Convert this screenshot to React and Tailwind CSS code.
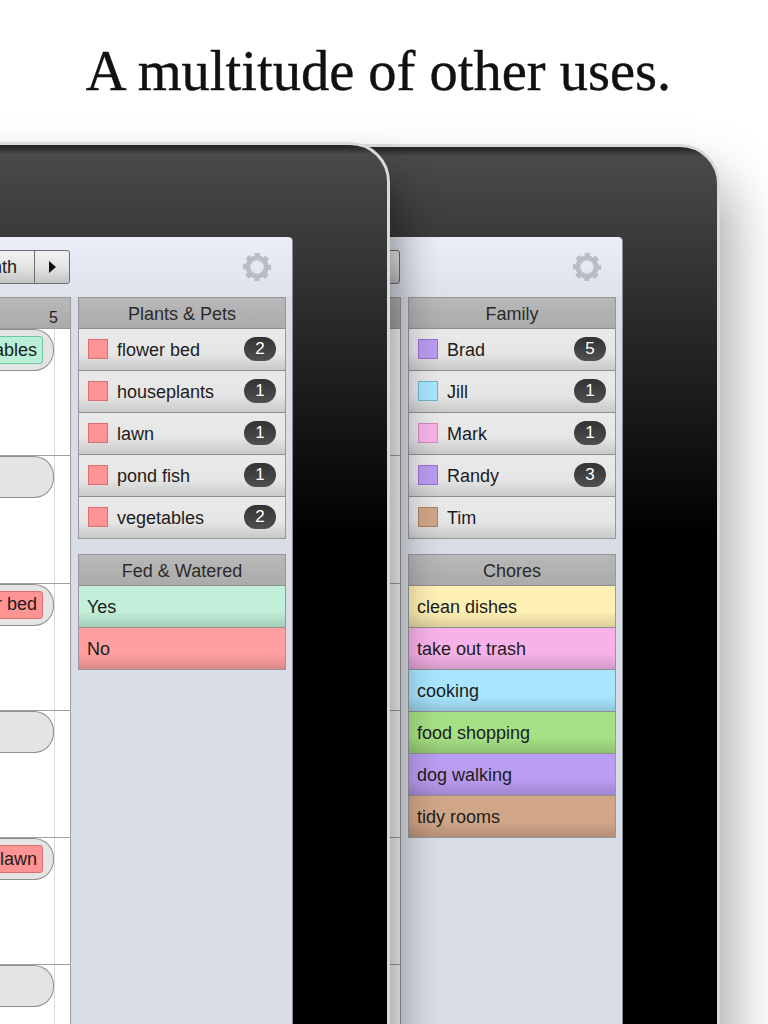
const F = { fontFamily: '"Liberation Sans", Arial, sans-serif' };

const plants = {
  title: "Plants & Pets",
  rows: [
    ["flower bed", "2"],
    ["houseplants", "1"],
    ["lawn", "1"],
    ["pond fish", "1"],
    ["vegetables", "2"],
  ].map(([n, c]) => ({ n, c, s: "bg-[#ff9494] border-[#d96f6f]" })),
};
const family = {
  title: "Family",
  rows: [
    { n: "Brad", c: "5", s: "bg-[#bb9bef] border-[#9a70d6]" },
    { n: "Jill", c: "1", s: "bg-[#a8e6ff] border-[#6fb6d2]" },
    { n: "Mark", c: "1", s: "bg-[#f9b3ea] border-[#d488c4]" },
    { n: "Randy", c: "3", s: "bg-[#bb9bef] border-[#9a70d6]" },
    { n: "Tim", s: "bg-[#d1a688] border-[#ad8264]" },
  ],
};
const fed = {
  title: "Fed & Watered",
  rows: [
    { n: "Yes", b: "bg-[#c1efd9]" },
    { n: "No", b: "bg-[#ff9f9f]" },
  ],
};
const chores = {
  title: "Chores",
  rows: [
    { n: "clean dishes", b: "bg-[#fff0b4]" },
    { n: "take out trash", b: "bg-[#f8b2e9]" },
    { n: "cooking", b: "bg-[#a8e6ff]" },
    { n: "food shopping", b: "bg-[#a6e084]" },
    { n: "dog walking", b: "bg-[#ba9cf0]" },
    { n: "tidy rooms", b: "bg-[#d1a688]" },
  ],
};

function Gear() {
  return (
    <svg width="30" height="30" viewBox="-15 -15 30 30" className="text-[#b8bcc4]">
      <circle r="9" fill="none" stroke="currentColor" strokeWidth="5" />
      <circle r="12.4" fill="none" stroke="currentColor" strokeWidth="3.4" strokeDasharray="5.2 4.54" strokeDashoffset="2.6" />
      <circle r="6.8" fill="none" stroke="#d2d5dc" strokeWidth="0.8" />
    </svg>
  );
}

function Group({ group }) {
  return (
    <div className="border border-[#979797] text-[18px] leading-[22px] text-[#1c1c1c]">
      <div className="flex h-[31px] items-center justify-center border-b border-[#8f8f8f] bg-gradient-to-b from-[#b8b8b8] to-[#ababab] pt-px text-[#2a2a2a]">
        {group.title}
      </div>
      {group.rows.map((r) =>
        r.b ? (
          <div key={r.n} className={`h-[42px] border-b border-[#8f8f8f] last:h-[41px] last:border-b-0 ${r.b}`}>
            <div className="flex h-full items-center bg-[linear-gradient(180deg,transparent_62%,rgba(0,0,0,0.14))] pl-[8px]">{r.n}</div>
          </div>
        ) : (
          <div key={r.n} className="flex h-[42px] items-center border-b border-[#8f8f8f] bg-[linear-gradient(180deg,#e9e9e9_0%,#e6e6e6_60%,#c9c9c9_100%)] pl-[9px] pr-[9px] last:h-[41px] last:border-b-0">
            <span className="mb-[2px] mr-[9px] flex">
              <span className={`h-[20px] w-[20px] border ${r.s}`} />
            </span>
            <span className="flex-1">{r.n}</span>
            {r.c && (
              <span className="mb-px flex h-[24px] w-[32px] items-center justify-center rounded-full bg-gradient-to-b from-[#333333] to-[#505050] text-[17px] text-white">
                {r.c}
              </span>
            )}
          </div>
        )
      )}
    </div>
  );
}

function Cell({ tag }) {
  return (
    <div className="flex h-[127.25px] border-b border-[#a0a0a0]">
      <div className="flex flex-1 items-start justify-end overflow-hidden border-r border-[#dcdcdc]">
        <div className="flex h-[42px] w-[300px] shrink-0 items-center justify-end rounded-r-[20px] border border-l-0 border-[#8e8e8e] bg-[#e4e4e4] pr-[10px]">
          {tag && (
            <span className={`flex h-[28px] items-center rounded-[3px] border px-[5px] text-[18px] text-[#1c1c1c] ${tag.c}`}>{tag.t}</span>
          )}
        </div>
      </div>
      <div className="w-[15px] shrink-0" />
    </div>
  );
}

function Device({ frame, padding, tags, groups }) {
  return (
    <div className={`absolute h-[1000px] w-[790px] rounded-[40px] border-[3px] border-[#dadada] bg-[linear-gradient(180deg,#262626_0px,#2c2c2c_3px,#4a4a4a_9px,#000000_390px)] ${frame} ${padding}`} style={F}>
      <div className="ml-[-3px] mr-[94px] flex h-[800px] flex-col rounded-tr-[4px] border-r border-[#8a8d94]">
        <div className="flex h-[60px] shrink-0 items-center rounded-tr-[4px] bg-gradient-to-b from-[#ebeef9] to-[#dee2ec]">
          <div className="flex flex-1 items-center justify-end">
            <div className="flex h-[34px] overflow-hidden rounded-[3px] border border-[#6e6e6e] bg-[linear-gradient(180deg,#f1f1f1,#e4e4e4_50%,#c4c4c4)] text-[18px] text-[#222222]">
              <div className="flex w-[200px] items-center justify-end pr-[17px]">Month</div>
              <div className="flex w-[35px] items-center justify-center border-l border-[#6e6e6e] pb-px">
                <span className="h-0 w-0 border-y-[6px] border-l-[7px] border-y-transparent border-l-[#111111]" />
              </div>
            </div>
          </div>
          <div className="flex w-[222px] shrink-0 justify-end pr-[20px]">
            <Gear />
          </div>
        </div>
        <div className="flex flex-1">
          <div className="min-w-0 flex-1 border-r border-[#9a9a9a] bg-white">
            <div className="flex h-[32px] items-end justify-end border-y border-[#999999] bg-gradient-to-b from-[#b8b8b8] to-[#ababab] pr-[12px] text-[16px] leading-[20px] text-[#222222]">5</div>
            {[0, 1, 2, 3, 4, 5].map((i) => (
              <Cell key={i} tag={tags[i]} />
            ))}
          </div>
          <div className="flex w-[221px] shrink-0 flex-col gap-[15px] bg-[#d9dde6] pl-[7px] pr-[6px]">
            <Group group={groups[0]} />
            <Group group={groups[1]} />
          </div>
        </div>
      </div>
    </div>
  );
}

export default function App() {
  const green = "bg-[#b9efd6] border-[#72c2a4]";
  const red = "bg-[#ff9494] border-[#d96f6f]";
  return (
    <div className="relative h-[1024px] w-[768px] overflow-hidden bg-white">
      <h1 className="pr-[11px] pt-[37px] text-center text-[56.5px] leading-[68px] text-[#111111] [-webkit-text-stroke:0.4px_#111111]" style={{ fontFamily: '"Liberation Serif", Georgia, serif' }}>
        A multitude of other uses.
      </h1>
      <Device
        frame="left-[-70px] top-[144px] shadow-[12px_34px_56px_rgba(0,0,0,0.35)]"
        padding="pt-[90px]"
        tags={[]}
        groups={[family, chores]}
      />
      <Device
        frame="left-[-400px] top-[142px] shadow-[10px_32px_40px_rgba(0,0,0,0.4)]"
        padding="pt-[92px]"
        tags={[{ t: "vegetables", c: green }, null, { t: "flower bed", c: red }, null, { t: "lawn", c: red }, null]}
        groups={[plants, fed]}
      />
    </div>
  );
}
